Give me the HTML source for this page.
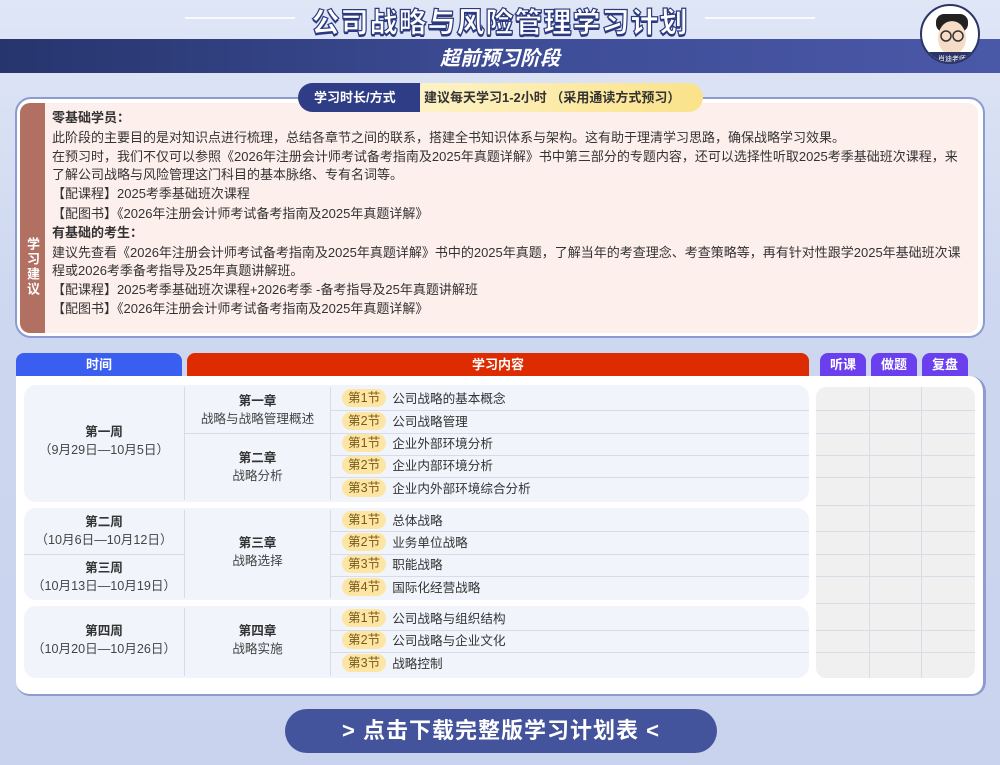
<!DOCTYPE html>
<html><head><meta charset="utf-8"><style>
*{margin:0;padding:0;box-sizing:border-box}
body{width:1000px;height:765px;overflow:hidden;position:relative;font-family:"Liberation Sans","Noto Sans CJK SC",sans-serif;background:linear-gradient(180deg,#dfe6f6 0%,#cdd7ef 40%,#c9d3ee 100%);color:#333}
.abs{position:absolute}
.title{left:0;width:1000px;top:1px;text-align:center;font-size:28px;font-weight:900;color:#fff;-webkit-text-stroke:1.2px #2b3a80;letter-spacing:1px;text-shadow:0 2px 0 #2b3a80}
.line{top:17px;height:2px;background:#fff;opacity:.8}
.band{left:0;top:39px;width:1000px;height:34px;background:linear-gradient(90deg,#26356d,#3d4c95 50%,#4a58a8);}
.sub{left:0;width:1000px;top:42px;text-align:center;font-size:20px;font-weight:bold;font-style:italic;color:#fff}
.av{left:920px;top:4px;width:60px;height:60px;border-radius:50%;background:#fff;border:2px solid #2b3566;overflow:hidden}
.box{left:15px;top:97px;width:970px;height:241px;border:2px solid #8e9bd0;border-radius:16px;background:#fff}
.pink{left:20px;top:103px;width:958px;height:230px;background:#fdefec;border-radius:10px;overflow:hidden}
.strip{left:20px;top:103px;width:25px;height:230px;background:#b27063;border-radius:10px 0 0 10px;color:#fff;font-size:13px;font-weight:bold;writing-mode:vertical-rl;text-align:center;line-height:25px;padding-top:98px;letter-spacing:2px}
.txt{left:52px;top:108px;width:925px;font-size:13px;line-height:19.5px;color:#333}
.pill{top:83px;height:29px;line-height:29px;font-size:13px;font-weight:bold}
.hd{top:353px;height:24px;line-height:24px;text-align:center;color:#fff;font-size:13px;font-weight:bold;border-radius:8px 8px 0 0}
.tbl{left:16px;top:376px;width:970px;height:320px;background:#fff;border-radius:0 16px 14px 14px;border-right:3px solid #8e9bd0;border-bottom:2px solid #8e9bd0}
.g{left:24px;width:785px;background:#f1f4fb;border-radius:12px}
.vl{width:1px;background:#d8dce6}
.hl{height:1px;background:#d8dce6}
.cell{text-align:center;color:#444;font-size:12.6px;line-height:18px}
.cell b{color:#333}
.r{font-size:12.6px;color:#333;height:22px;line-height:22px;left:342px}
.bd{display:inline-block;background:#fde6a3;color:#7a5a1a;border-radius:11px;padding:0 6px;height:18px;line-height:18px;margin-right:6px;vertical-align:1px}
.chk{left:816px;width:159px;top:387px;height:291px;background:#f0f0f0;border-radius:10px}
.btn{left:285px;top:709px;width:432px;height:44px;border-radius:22px;background:#44549c;color:#fff;font-size:22px;font-weight:bold;text-align:center;line-height:44px;letter-spacing:1px}
</style></head><body>
<div class="abs line" style="left:185px;width:110px"></div>
<div class="abs line" style="left:705px;width:110px"></div>
<div class="abs title">公司战略与风险管理学习计划</div>
<div class="abs band"></div>
<div class="abs sub">超前预习阶段</div>
<div class="abs av"><svg width="60" height="60"><rect x="14" y="8" width="32" height="18" rx="8" fill="#222"/><ellipse cx="30" cy="32" rx="14" ry="17" fill="#f6dcc6"/><path d="M15 22 Q30 8 45 22 L45 18 Q30 2 15 18Z" fill="#222"/><circle cx="24" cy="30" r="5" fill="none" stroke="#333" stroke-width="1.5"/><circle cx="36" cy="30" r="5" fill="none" stroke="#333" stroke-width="1.5"/><path d="M8 60 Q30 42 52 60Z" fill="#3a4470"/><rect x="4" y="46" width="52" height="12" rx="4" fill="#2b3566"/><text x="30" y="55" font-size="7" fill="#fff" text-anchor="middle" font-family="Noto Sans CJK SC">肖迪老师</text></svg></div>

<div class="abs box"></div>
<div class="abs pink"></div>
<div class="abs strip">学习建议</div>
<div class="abs pill" style="left:298px;width:122px;background:#2e3d85;color:#fff;border-radius:15px 0 0 15px;padding-left:16px;z-index:2">学习时长/方式</div>
<div class="abs pill" style="left:410px;width:293px;background:linear-gradient(90deg,#fdf3c8,#fbe28a);color:#333;border-radius:0 15px 15px 0;padding-left:14px;clip-path:polygon(4% 0,100% 0,100% 100%,0 100%)">建议每天学习1-2小时 （采用通读方式预习）</div>
<div class="abs txt">
<b>零基础学员：</b><br>
此阶段的主要目的是对知识点进行梳理，总结各章节之间的联系，搭建全书知识体系与架构。这有助于理清学习思路，确保战略学习效果。<br>
<span style="line-height:18px;display:block;margin-top:1px">在预习时，我们不仅可以参照《2026年注册会计师考试备考指南及2025年真题详解》书中第三部分的专题内容，还可以选择性听取2025考季基础班次课程，来<br>了解公司战略与风险管理这门科目的基本脉络、专有名词等。</span>
【配课程】2025考季基础班次课程<br>
【配图书】《2026年注册会计师考试备考指南及2025年真题详解》<br>
<b>有基础的考生：</b><br>
<span style="line-height:18px;display:block;margin-top:1px">建议先查看《2026年注册会计师考试备考指南及2025年真题详解》书中的2025年真题，了解当年的考查理念、考查策略等，再有针对性跟学2025年基础班次课<br>程或2026考季备考指导及25年真题讲解班。</span>
【配课程】2025考季基础班次课程+2026考季 -备考指导及25年真题讲解班<br>
【配图书】《2026年注册会计师考试备考指南及2025年真题详解》
</div>

<div class="abs hd" style="left:16px;width:166px;background:#3a5ef0">时间</div>
<div class="abs hd" style="left:187px;width:622px;background:#de2c02">学习内容</div>
<div class="abs hd" style="left:820px;width:46px;background:#6a40ee">听课</div>
<div class="abs hd" style="left:871px;width:46px;background:#6a40ee">做题</div>
<div class="abs hd" style="left:922px;width:46px;background:#6a40ee">复盘</div>
<div class="abs tbl"></div>

<div class="abs g" style="top:385px;height:117px"></div>
<div class="abs g" style="top:508px;height:92px"></div>
<div class="abs g" style="top:606px;height:72px"></div>
<div class="abs vl" style="left:184px;top:387px;height:113px"></div>
<div class="abs vl" style="left:330px;top:387px;height:113px"></div>
<div class="abs vl" style="left:184px;top:510px;height:88px"></div>
<div class="abs vl" style="left:330px;top:510px;height:88px"></div>
<div class="abs vl" style="left:184px;top:608px;height:68px"></div>
<div class="abs vl" style="left:330px;top:608px;height:68px"></div>
<div class="abs hl" style="left:185px;top:433px;width:145px"></div>
<div class="abs hl" style="left:24px;top:554px;width:160px"></div>
<div class="abs hl" style="left:331px;top:410px;width:478px"></div>
<div class="abs hl" style="left:331px;top:433px;width:478px"></div>
<div class="abs hl" style="left:331px;top:455px;width:478px"></div>
<div class="abs hl" style="left:331px;top:477px;width:478px"></div>
<div class="abs hl" style="left:331px;top:531px;width:478px"></div>
<div class="abs hl" style="left:331px;top:554px;width:478px"></div>
<div class="abs hl" style="left:331px;top:576px;width:478px"></div>
<div class="abs hl" style="left:331px;top:630px;width:478px"></div>
<div class="abs hl" style="left:331px;top:652px;width:478px"></div>

<div class="abs cell" style="left:24px;width:160px;top:423px"><b>第一周</b><br>（9月29日—10月5日）</div>
<div class="abs cell" style="left:185px;width:145px;top:392px"><b>第一章</b><br>战略与战略管理概述</div>
<div class="abs cell" style="left:185px;width:145px;top:449px"><b>第二章</b><br>战略分析</div>
<div class="abs cell" style="left:24px;width:160px;top:513px"><b>第二周</b><br>（10月6日—10月12日）</div>
<div class="abs cell" style="left:24px;width:160px;top:559px"><b>第三周</b><br>（10月13日—10月19日）</div>
<div class="abs cell" style="left:185px;width:145px;top:534px"><b>第三章</b><br>战略选择</div>
<div class="abs cell" style="left:24px;width:160px;top:622px"><b>第四周</b><br>（10月20日—10月26日）</div>
<div class="abs cell" style="left:185px;width:145px;top:622px"><b>第四章</b><br>战略实施</div>

<div class="abs r" style="top:388px"><span class="bd">第1节</span>公司战略的基本概念</div>
<div class="abs r" style="top:411px"><span class="bd">第2节</span>公司战略管理</div>
<div class="abs r" style="top:433px"><span class="bd">第1节</span>企业外部环境分析</div>
<div class="abs r" style="top:455px"><span class="bd">第2节</span>企业内部环境分析</div>
<div class="abs r" style="top:478px"><span class="bd">第3节</span>企业内外部环境综合分析</div>
<div class="abs r" style="top:510px"><span class="bd">第1节</span>总体战略</div>
<div class="abs r" style="top:532px"><span class="bd">第2节</span>业务单位战略</div>
<div class="abs r" style="top:554px"><span class="bd">第3节</span>职能战略</div>
<div class="abs r" style="top:577px"><span class="bd">第4节</span>国际化经营战略</div>
<div class="abs r" style="top:608px"><span class="bd">第1节</span>公司战略与组织结构</div>
<div class="abs r" style="top:630px"><span class="bd">第2节</span>公司战略与企业文化</div>
<div class="abs r" style="top:653px"><span class="bd">第3节</span>战略控制</div>

<div class="abs chk"></div>
<div class="abs vl" style="left:869px;top:387px;height:291px"></div>
<div class="abs vl" style="left:921px;top:387px;height:291px"></div>
<div class="abs hl" style="left:816px;top:410px;width:159px"></div>
<div class="abs hl" style="left:816px;top:433px;width:159px"></div>
<div class="abs hl" style="left:816px;top:455px;width:159px"></div>
<div class="abs hl" style="left:816px;top:477px;width:159px"></div>
<div class="abs hl" style="left:816px;top:505px;width:159px"></div>
<div class="abs hl" style="left:816px;top:531px;width:159px"></div>
<div class="abs hl" style="left:816px;top:554px;width:159px"></div>
<div class="abs hl" style="left:816px;top:576px;width:159px"></div>
<div class="abs hl" style="left:816px;top:603px;width:159px"></div>
<div class="abs hl" style="left:816px;top:630px;width:159px"></div>
<div class="abs hl" style="left:816px;top:652px;width:159px"></div>

<div class="abs btn">&gt; 点击下载完整版学习计划表 &lt;</div>
</body></html>
